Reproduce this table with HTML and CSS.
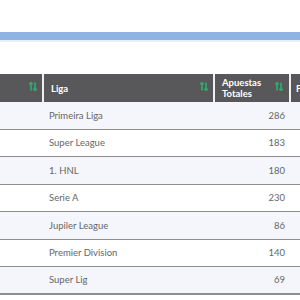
FILE: index.html
```html
<!DOCTYPE html>
<html>
<head>
<meta charset="utf-8">
<link rel="stylesheet" href="styles.css">
</head>
<body>
<div class="page">
  <div class="topbar"></div>
  <div class="table">
    <div class="row head">
      <div class="cell c1"><span class="sort"><svg width="8" height="9" viewBox="0 0 8 9"><path d="M2 0.5 L2 8.5 M0.3 2.3 L2 0.6 L3.7 2.3 M6 0.5 L6 8.5 M4.3 6.7 L6 8.4 L7.7 6.7" stroke="#34a570" stroke-width="1.8" fill="none"/></svg></span></div>
      <div class="cell c2"><span class="htext">Liga</span><span class="sort"><svg width="8" height="9" viewBox="0 0 8 9"><path d="M2 0.5 L2 8.5 M0.3 2.3 L2 0.6 L3.7 2.3 M6 0.5 L6 8.5 M4.3 6.7 L6 8.4 L7.7 6.7" stroke="#34a570" stroke-width="1.8" fill="none"/></svg></span></div>
      <div class="cell c3"><span class="htext">Apuestas<br>Totales</span><span class="sort"><svg width="8" height="9" viewBox="0 0 8 9"><path d="M2 0.5 L2 8.5 M0.3 2.3 L2 0.6 L3.7 2.3 M6 0.5 L6 8.5 M4.3 6.7 L6 8.4 L7.7 6.7" stroke="#34a570" stroke-width="1.8" fill="none"/></svg></span></div>
      <div class="cell c4"><span class="htext">P</span></div>
    </div>
    <div class="row odd"><div class="cell c1"></div><div class="cell c2">Primeira Liga</div><div class="cell c3 num">286</div><div class="cell c4"></div></div>
    <div class="row"><div class="cell c1"></div><div class="cell c2">Super League</div><div class="cell c3 num">183</div><div class="cell c4"></div></div>
    <div class="row odd"><div class="cell c1"></div><div class="cell c2">1. HNL</div><div class="cell c3 num">180</div><div class="cell c4"></div></div>
    <div class="row"><div class="cell c1"></div><div class="cell c2">Serie A</div><div class="cell c3 num">230</div><div class="cell c4"></div></div>
    <div class="row odd"><div class="cell c1"></div><div class="cell c2">Jupiler League</div><div class="cell c3 num">86</div><div class="cell c4"></div></div>
    <div class="row"><div class="cell c1"></div><div class="cell c2">Premier Division</div><div class="cell c3 num">140</div><div class="cell c4"></div></div>
    <div class="row odd last"><div class="cell c1"></div><div class="cell c2">Super Lig</div><div class="cell c3 num">69</div><div class="cell c4"></div></div>
  </div>
</div>
</body>
</html>
```

FILE: styles.css
```css
html, body {
  margin: 0;
  padding: 0;
  background: #ffffff;
  overflow: hidden;
}
.page {
  width: 300px;
  height: 300px;
  overflow: hidden;
  padding-top: 32px;
  box-sizing: border-box;
  font-family: Lato, "Open Sans", sans-serif;
}
.topbar {
  height: 8px;
  background: #8fb3e3;
  border-bottom: 2px solid #e8eff9;
  margin-bottom: 32px;
}
.table {
  width: 340px;
}
.row {
  display: flex;
  height: 27.5px;
  box-sizing: border-box;
  border-bottom: 1px solid #8e8e8e;
  background: #ffffff;
  font-size: 9.5px;
  color: #666666;
}
.row.odd {
  background: #f4f6fb;
}
.row.last {
  border-bottom: 2px solid #8e8e8e;
}
.cell {
  display: flex;
  align-items: center;
  box-sizing: border-box;
}
.c1 { width: 42px; }
.c2 { width: 171px; padding-left: 7px; }
.c3 { width: 76px; padding-left: 2px; }
.c4 { flex: 1; }
.num {
  justify-content: flex-end;
  padding-right: 4px;
}
.row.head {
  height: 28px;
  background: #58585a;
  border-bottom: none;
  color: #ffffff;
  font-weight: 700;
  font-size: 9.5px;
  line-height: 11px;
}
.head .cell {
  justify-content: space-between;
}
.head .c1 { padding-right: 5px; justify-content: flex-end; }
.head .c2 { border-left: 2px solid #f0f0f0; padding-left: 7px; padding-right: 5px; }
.head .c3 { border-left: 2px solid #f0f0f0; padding-left: 7px; padding-right: 6px; }
.head .c4 { border-left: 2px solid #f0f0f0; padding-left: 5px; }
.sort {
  display: flex;
  margin-top: -3px;
}
```
